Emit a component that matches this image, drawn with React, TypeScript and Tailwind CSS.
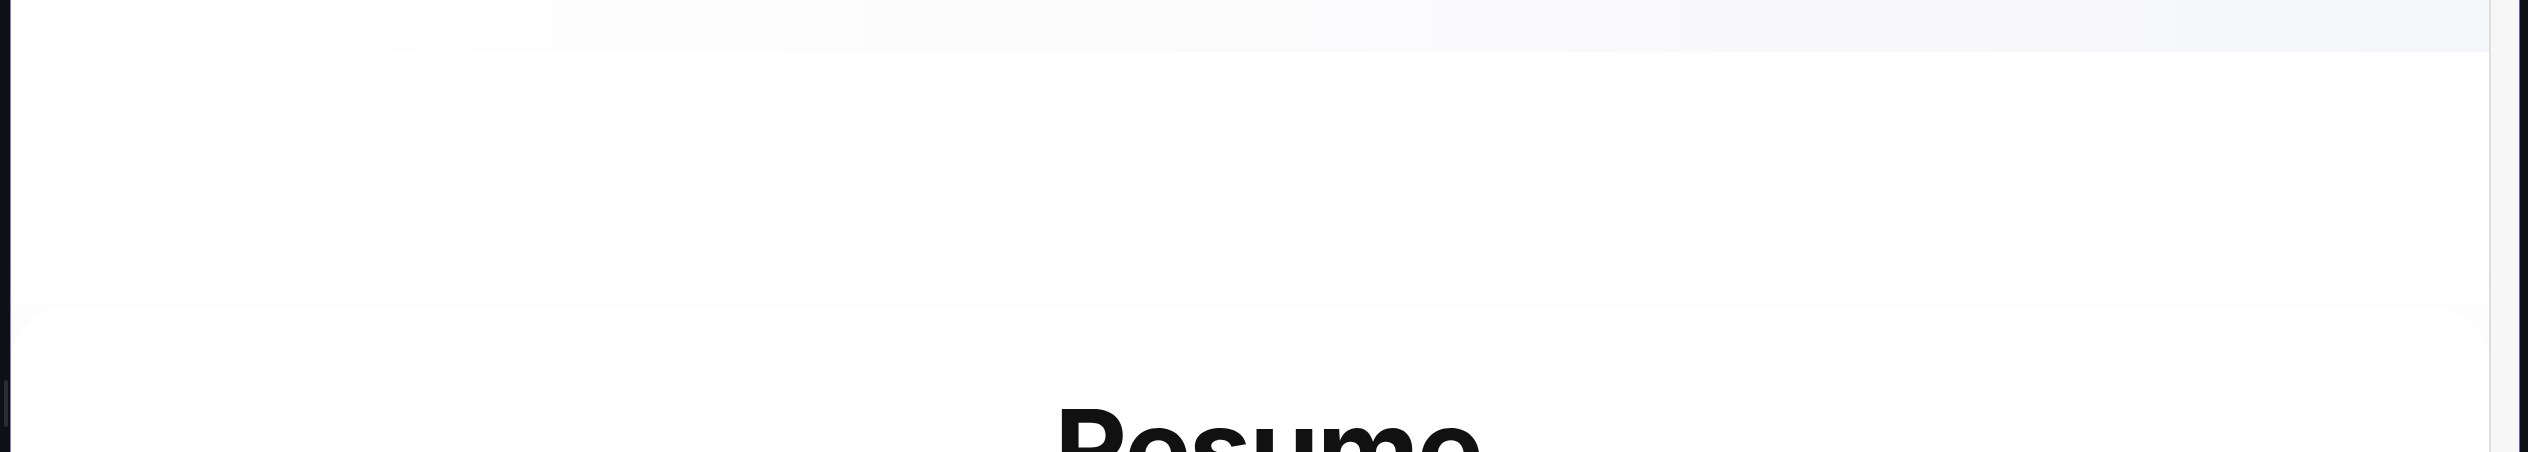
export default function App() {
  return (
    <div className="flex h-[452px] w-full overflow-hidden bg-[#0e1015] font-['Inter',sans-serif]">
      {/* left window edge */}
      <div className="relative w-[11px] shrink-0 border-r border-[#8a80d6] bg-[#0e1015]">
        <div className="absolute left-[4px] top-[380px] h-[47px] w-[4px] rounded-full bg-[#2a2b33]" />
      </div>

      <main className="flex min-w-0 flex-1 flex-col bg-white">
        <div className="h-[52px] shrink-0 bg-gradient-to-r from-white via-[#fbfbfc] to-[#f5f6fa]" />
        <div className="h-[198px] shrink-0 bg-white" />
        <div className="flex flex-1 flex-col bg-gradient-to-b from-white to-[#f7f7f7]">
          <div className="h-[57px] shrink-0" />
          <section className="flex-1 rounded-t-[56px] bg-white pl-[36px] pt-[86px]">
            <h1 className="text-center text-[112px] font-bold leading-none tracking-[-0.02em] text-[#111111]">
              Resume
            </h1>
          </section>
        </div>
      </main>

      {/* right scroll gutter */}
      <div className="w-[30px] shrink-0 border-l-2 border-[#dedede] bg-[#f7f7f7]" />
      <div className="w-[9px] shrink-0 border-l border-[#6f62c9] bg-[#0e1015]" />
    </div>
  );
}
